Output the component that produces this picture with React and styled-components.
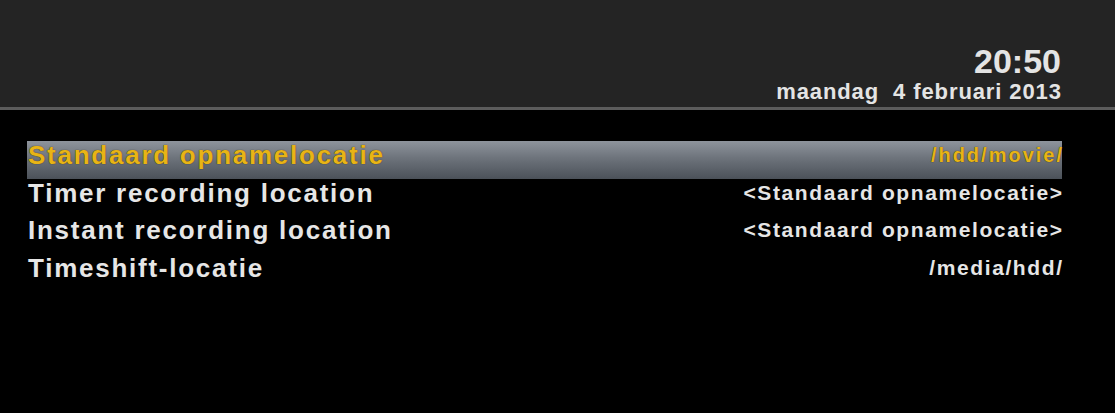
import React from "react";
import styled, { createGlobalStyle } from "styled-components";

const Global = createGlobalStyle`
  html, body { margin: 0; padding: 0; background: #000; }
  body { width: 1115px; height: 413px; overflow: hidden; font-family: "Liberation Sans", Arial, sans-serif; }
`;

const Screen = styled.div`
  width: 1115px;
  height: 413px;
  background: #000;
  display: flex;
  flex-direction: column;
`;

const Header = styled.header`
  height: 110px;
  background: #242424;
  border-bottom: 3px solid #5c5c5c;
  display: flex;
  flex-direction: column;
  align-items: flex-end;
  padding: 44px 54px 0 0;
  box-sizing: border-box;
`;

const Clock = styled.div`
  color: #e4e4e4;
  font-size: 34px;
  font-weight: bold;
  line-height: 34px;
`;

const DateText = styled.div`
  color: #e4e4e4;
  font-size: 22px;
  font-weight: bold;
  line-height: 22px;
  letter-spacing: 0.9px;
  margin: 3px -0.9px 0 0;
  white-space: pre;
`;

const List = styled.div`
  display: flex;
  flex-direction: column;
  padding: 31px 53px 0 27px;
`;

const Row = styled.div`
  height: 37.5px;
  display: flex;
  align-items: flex-start;
  justify-content: space-between;
  box-sizing: border-box;
  padding: 0 0 0 1px;
  background: ${(p) =>
    p.$selected ? "linear-gradient(to bottom, #8e949c 0%, #6d737b 45%, #4b5159 100%)" : "transparent"};
`;

const Label = styled.span`
  font-size: 26px;
  font-weight: bold;
  line-height: 29px;
  letter-spacing: 1.75px;
  color: ${(p) => (p.$selected ? "#e8b416" : "#e6e6e6")};
  text-shadow: ${(p) => (p.$selected ? "0 0 1px #2a2200" : "none")};
`;

const Value = styled.span`
  font-size: ${(p) => (p.$selected ? "20px" : "21px")};
  font-weight: bold;
  line-height: 23px;
  letter-spacing: ${(p) => (p.$selected ? "2px" : "1.6px")};
  margin: ${(p) => (p.$selected ? "3px -2px 0 0" : "2px -1.6px 0 0")};
  color: ${(p) => (p.$selected ? "#e8b416" : "#e6e6e6")};
  text-shadow: ${(p) => (p.$selected ? "0 0 1px #2a2200" : "none")};
`;

const rows = [
  ["Standaard opnamelocatie", "/hdd/movie/"],
  ["Timer recording location", "<Standaard opnamelocatie>"],
  ["Instant recording location", "<Standaard opnamelocatie>"],
  ["Timeshift-locatie", "/media/hdd/"],
];

export default function App() {
  return (
    <Screen>
      <Global />
      <Header>
        <Clock>20:50</Clock>
        <DateText>{"maandag  4 februari 2013"}</DateText>
      </Header>
      <List>
        {rows.map(([l, v], i) => (
          <Row key={l} $selected={i === 0}>
            <Label $selected={i === 0}>{l}</Label>
            <Value $selected={i === 0}>{v}</Value>
          </Row>
        ))}
      </List>
    </Screen>
  );
}
